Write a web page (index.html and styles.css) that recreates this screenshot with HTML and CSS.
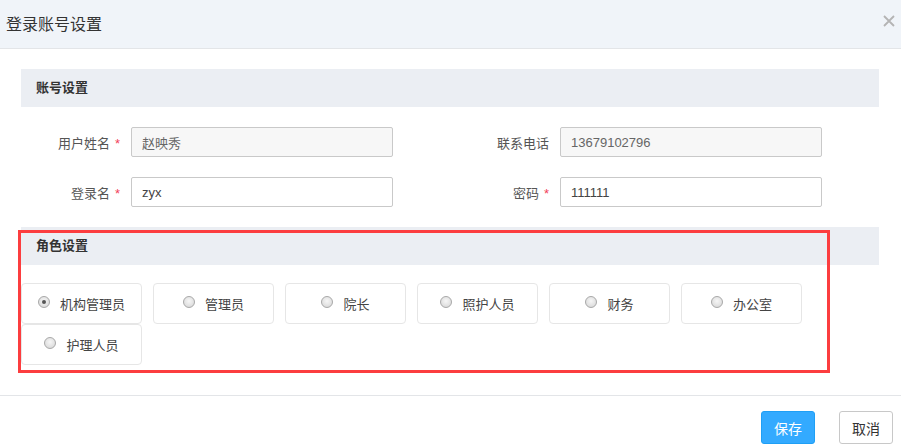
FILE: index.html
```html
<!DOCTYPE html>
<html lang="zh-CN">
<head>
  <meta charset="UTF-8" />
  <title>登录账号设置</title>
  <link rel="stylesheet" href="styles.css">
</head>
<body>
  <div class="dialog">
    <div class="dialog-header">
      <span class="dialog-title">登录账号设置</span>
      <span class="dialog-close">
        <svg width="12" height="12" viewBox="0 0 12 12"><path d="M1 1L11 11M11 1L1 11" stroke="#b4b4b4" stroke-width="1.8" fill="none"/></svg>
      </span>
    </div>

    <div class="dialog-body">
      <div class="section-title">账号设置</div>
      <div class="form-grid">
        <div class="form-item">
          <label class="form-label">用户姓名<i class="req">*</i></label>
          <input class="form-input" type="text" value="赵映秀" readonly />
        </div>
        <div class="form-item">
          <label class="form-label">联系电话</label>
          <input class="form-input" type="text" value="13679102796" readonly />
        </div>
        <div class="form-item">
          <label class="form-label">登录名<i class="req">*</i></label>
          <input class="form-input editable" type="text" value="zyx" />
        </div>
        <div class="form-item">
          <label class="form-label">密码<i class="req">*</i></label>
          <input class="form-input editable" type="text" value="111111" />
        </div>
      </div>

      <div class="role-section">
        <div class="section-title">角色设置</div>
        <div class="role-list">
          <label class="role-item"><span class="radio checked"></span>机构管理员</label>
          <label class="role-item"><span class="radio"></span>管理员</label>
          <label class="role-item"><span class="radio"></span>院长</label>
          <label class="role-item"><span class="radio"></span>照护人员</label>
          <label class="role-item"><span class="radio"></span>财务</label>
          <label class="role-item"><span class="radio"></span>办公室</label>
          <label class="role-item"><span class="radio"></span>护理人员</label>
        </div>
        <!-- 标注框 -->
        <div class="highlight"></div>
      </div>
    </div>

    <div class="dialog-footer">
      <button class="btn btn-primary">保存</button>
      <button class="btn">取消</button>
    </div>
  </div>
</body>
</html>
```

FILE: styles.css
```css
body {
  margin: 0;
  font-family: "Liberation Sans", "Noto Sans CJK SC", sans-serif;
  background: #fff;
  color: #333;
}
.dialog {
  width: 901px;
  height: 448px;
  overflow: hidden;
}
.dialog-header {
  height: 48px;
  background: #f0f4f9; /* 연한 블루그레이 */
  border-bottom: 1px solid #e3e5e8;
  display: flex;
  align-items: center;
  justify-content: space-between;
  padding: 0 6px;
}
.dialog-title {
  font-size: 16px;
  color: #333;
  margin-top: -3px;
}
.dialog-close {
  display: flex;
  margin-top: -6px;
}
.dialog-body {
  padding: 20px 22px 30px 21px;
}
.section-title {
  height: 38px;
  line-height: 38px;
  background: #ebeef3;
  padding-left: 15px;
  font-size: 13px;
  font-weight: bold;
  color: #333;
}
.form-grid {
  display: grid;
  grid-template-columns: 1fr 1fr;
  row-gap: 20px;
  padding: 20px 0;
}
.form-item {
  display: flex;
  align-items: center;
  height: 30px;
}
.form-label {
  width: 110px;
  box-sizing: border-box;
  padding-right: 11px;
  text-align: right;
  font-size: 13px;
  color: #555;
}
.req {
  font-style: normal;
  color: #f2405a;
  margin-left: 5px;
}
.form-input {
  width: 262px;
  height: 30px;
  box-sizing: border-box;
  border: 1px solid #c9c9c9;
  border-radius: 2px;
  padding: 0 10px;
  font-family: inherit;
  font-size: 13px;
  color: #666;
  background: #f7f7f7;
  outline: none;
}
.form-input.editable {
  background: #fff;
  color: #444;
}
.role-section {
  position: relative;
}
.role-list {
  display: flex;
  flex-wrap: wrap;
  padding-top: 18px;
}
.role-item {
  width: 121px;
  height: 41px;
  box-sizing: border-box;
  margin-right: 11px;
  border: 1px solid #e6e6e6;
  border-radius: 4px;
  display: flex;
  align-items: center;
  justify-content: center;
  gap: 10px;
  font-size: 13px;
  color: #444;
  cursor: pointer;
}
.radio {
  width: 12px;
  height: 12px;
  box-sizing: border-box;
  border-radius: 50%;
  border: 1px solid #a8a8a8;
  background: radial-gradient(circle at 50% 40%, #f6f6f6, #d4d4d4);
  margin-bottom: 4px;
  display: flex;
  align-items: center;
  justify-content: center;
}
.radio.checked::after {
  content: "";
  width: 4px;
  height: 4px;
  border-radius: 50%;
  background: #555;
}
.highlight {
  position: absolute;
  left: -3px;
  top: 3px;
  width: 812px;
  height: 143px;
  box-sizing: border-box;
  border: 3px solid #fc3d3f;
  pointer-events: none;
}
.dialog-footer {
  border-top: 1px solid #e3e5e8;
  display: flex;
  justify-content: flex-end;
  gap: 24px;
  padding: 15px 8px 0 0;
}
.btn {
  height: 33px;
  padding: 0 12px;
  font-family: inherit;
  font-size: 14px;
  border: 1px solid #c8c8c8;
  border-radius: 3px;
  background: #fff;
  color: #333;
  cursor: pointer;
}
.btn-primary {
  background: #33aaff;
  border-color: #1f9ff5;
  color: #fff;
}
```
